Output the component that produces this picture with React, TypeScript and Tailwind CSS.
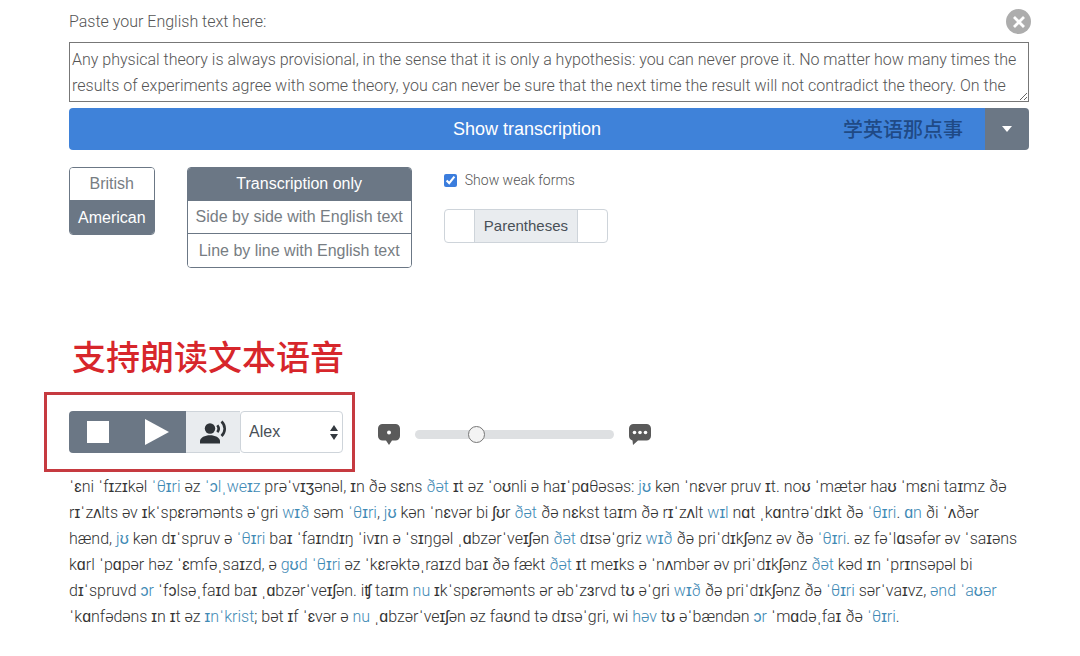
import { useState } from "react";
import clsx from "clsx";

const TEXT =
  "Any physical theory is always provisional, in the sense that it is only a hypothesis: you can never prove it. No matter how many times the results of experiments agree with some theory, you can never be sure that the next time the result will not contradict the theory. On the";

// words between asterisks have several pronunciations and are shown in blue
const LINES = [
  "ˈɛni ˈfɪzɪkəl *ˈθɪri* əz *ˈɔlˌweɪz* prəˈvɪʒənəl, ɪn ðə sɛns *ðət* ɪt əz ˈoʊnli ə haɪˈpɑθəsəs: *jʊ* kən ˈnɛvər pruv ɪt. noʊ ˈmætər haʊ ˈmɛni taɪmz ðə",
  "rɪˈzʌlts əv ɪkˈspɛrəmənts əˈgri *wɪð* səm *ˈθɪri*, *jʊ* kən ˈnɛvər bi ʃʊr *ðət* ðə nɛkst taɪm ðə rɪˈzʌlt *wɪl* nɑt ˌkɑntrəˈdɪkt ðə *ˈθɪri*. *ɑn* ði ˈʌðər",
  "hænd, *jʊ* kən dɪˈspruv ə *ˈθɪri* baɪ ˈfaɪndɪŋ ˈivɪn ə ˈsɪŋgəl ˌɑbzərˈveɪʃən *ðət* dɪsəˈgriz *wɪð* ðə priˈdɪkʃənz əv ðə *ˈθɪri*. əz fəˈlɑsəfər əv ˈsaɪəns",
  "kɑrl ˈpɑpər həz ˈɛmfəˌsaɪzd, ə *gʊd* *ˈθɪri* əz ˈkɛrəktəˌraɪzd baɪ ðə fækt *ðət* ɪt meɪks ə ˈnʌmbər əv priˈdɪkʃənz *ðət* kəd ɪn ˈprɪnsəpəl bi",
  "dɪˈspruvd *ɔr* ˈfɔlsəˌfaɪd baɪ ˌɑbzərˈveɪʃən. iʧ taɪm *nu* ɪkˈspɛrəmənts ər əbˈzɜrvd tʊ əˈgri *wɪð* ðə priˈdɪkʃənz ðə *ˈθɪri* sərˈvaɪvz, *ənd* *ˈaʊər*",
  "ˈkɑnfədəns ɪn ɪt əz *ɪnˈkrist*; bət ɪf ˈɛvər ə *nu* ˌɑbzərˈveɪʃən əz faʊnd tə dɪsəˈgri, wi *həv* tʊ əˈbændən *ɔr* ˈmɑdəˌfaɪ ðə *ˈθɪri*.",
];

const ACCENTS = ["British", "American"];
const LAYOUTS = [
  "Transcription only",
  "Side by side with English text",
  "Line by line with English text",
];

function ButtonGroup({
  items,
  initial,
}: {
  items: string[];
  initial: string;
}) {
  const [active, setActive] = useState(initial);
  return (
    <div className="flex flex-col divide-y divide-[#6b7785] overflow-hidden rounded border border-[#6b7785]">
      {items.map((item) => (
        <button
          key={item}
          type="button"
          aria-pressed={item === active}
          onClick={() => setActive(item)}
          className={clsx(
            "h-[33px] px-2 text-[16px]",
            item === active
              ? "bg-[#6b7785] text-white"
              : "bg-white text-[#777d83]"
          )}
        >
          {item}
        </button>
      ))}
    </div>
  );
}

function SlowIcon() {
  return (
    <svg viewBox="0 0 22 21" className="h-[21px] w-[22px]" aria-hidden="true">
      <path
        d="M4.5 0h13A4.5 4.5 0 0 1 22 4.5V12a4.5 4.5 0 0 1-4.5 4.5H14L11 21l-3-4.5H4.5A4.5 4.5 0 0 1 0 12V4.5A4.5 4.5 0 0 1 4.5 0z"
        fill="#5a5a5a"
      />
      <circle cx="11" cy="8.5" r="2" fill="#fff" />
    </svg>
  );
}

function FastIcon() {
  return (
    <svg viewBox="0 0 22 21" className="h-[21px] w-[22px]" aria-hidden="true">
      <path
        d="M4.5 0h13A4.5 4.5 0 0 1 22 4.5V12a4.5 4.5 0 0 1-4.5 4.5H9L4 21l-.5-4.6A4.5 4.5 0 0 1 0 12V4.5A4.5 4.5 0 0 1 4.5 0z"
        fill="#5a5a5a"
      />
      <circle cx="5.5" cy="8.5" r="1.8" fill="#fff" />
      <circle cx="11" cy="8.5" r="1.8" fill="#fff" />
      <circle cx="16.5" cy="8.5" r="1.8" fill="#fff" />
    </svg>
  );
}

function VoiceIcon() {
  return (
    <svg viewBox="0 0 27 24" className="h-6 w-[27px]" aria-hidden="true">
      <circle cx="10" cy="8.5" r="5.2" fill="#2e3338" />
      <path d="M0 23.5V21c0-3.6 5-5.8 10-5.8s10 2.2 10 5.8v2.5z" fill="#2e3338" />
      <path
        d="M17.3 5.2c1.6 2 1.6 4.9 0 6.9M21.5 1.5c4.3 4 4.3 10.3 0 14.5"
        fill="none"
        stroke="#2e3338"
        strokeWidth="2.6"
      />
    </svg>
  );
}

function Transcription() {
  return (
    <p className="mt-0.5 font-['Roboto','Liberation_Sans',sans-serif] text-[16px] leading-[26px] font-light whitespace-nowrap text-[#333]">
      {LINES.map((line, i) => (
        <span key={i} className="block">
          {line.split("*").map((part, j) =>
            j % 2 === 1 ? (
              <span key={j} className="text-[#3f8ab5]">
                {part}
              </span>
            ) : (
              part
            )
          )}
        </span>
      ))}
    </p>
  );
}

export default function App() {
  const [text, setText] = useState(TEXT);
  return (
    <main className="min-h-screen bg-white pt-[9px] pr-[51px] pb-6 pl-[69px] font-['Liberation_Sans',Arial,sans-serif]">
      <div className="flex h-[25px] items-center justify-between">
        <label
          htmlFor="source"
          className="font-['Roboto',sans-serif] text-[16px] font-light text-[#555]"
        >
          Paste your English text here:
        </label>
        <button
          type="button"
          aria-label="Clear text"
          onClick={() => setText("")}
          className="-mr-0.5 flex size-[25px] items-center justify-center rounded-full bg-[#adadad]"
        >
          <svg viewBox="0 0 12 12" className="size-3" aria-hidden="true">
            <path d="M1 1l10 10M11 1L1 11" stroke="#fff" strokeWidth="2.8" />
          </svg>
        </button>
      </div>
      <textarea
        id="source"
        value={text}
        onChange={(e) => setText(e.target.value)}
        className="mt-2 block h-[60px] w-full resize-y overflow-hidden border border-[#777] px-0.5 py-1 font-['Roboto',sans-serif] text-[16px] leading-[26px] font-light text-[#555]"
      />
      <div className="mt-1.5 flex h-[42px] overflow-hidden rounded">
        <button
          type="button"
          className="relative flex-1 bg-[#3f82d9] text-[18px] text-white"
        >
          Show transcription
          <span className="absolute top-2 right-[22px] font-['Noto_Sans_CJK_SC',sans-serif] text-[20px] leading-[26px] font-medium text-[#1f4a86]">
            学英语那点事
          </span>
        </button>
        <button
          type="button"
          aria-label="More options"
          className="flex w-11 items-center justify-center bg-[#6b7785]"
        >
          <svg viewBox="0 0 10 6" className="h-1.5 w-3" aria-hidden="true">
            <path d="M0 0h10L5 6z" fill="#fff" />
          </svg>
        </button>
      </div>

      <div className="mt-[17px] flex h-[102px] items-start gap-8">
        <ButtonGroup items={ACCENTS} initial="American" />
        <ButtonGroup items={LAYOUTS} initial="Transcription only" />
        <div>
          <label className="flex h-[26px] items-center gap-2 font-['Roboto',sans-serif] text-[14px] font-light text-[#555]">
            <input
              type="checkbox"
              defaultChecked
              className="size-[13px] accent-[#3b7ddd]"
            />
            Show weak forms
          </label>
          <div className="mt-4 flex h-[34px] w-fit overflow-hidden rounded border border-[#ced4da] text-[15px] text-[#495057]">
            <input aria-label="Opening parenthesis" className="w-[29px]" />
            <span className="flex items-center border-x border-[#ced4da] bg-[#e9ecef] px-[9px]">
              Parentheses
            </span>
            <input aria-label="Closing parenthesis" className="w-[29px]" />
          </div>
        </div>
      </div>

      <h2 className="mt-[65px] pl-[3px] font-['Noto_Sans_CJK_SC',sans-serif] text-[34px] leading-[44px] font-medium text-[#d7262b]">
        支持朗读文本语音
      </h2>
      <div className="mt-3.5 flex items-center">
        <div className="-ml-[25px] flex border-[3px] border-[#c63a40] py-4 pr-[9px] pl-[22px]">
          <div className="flex h-[42px] w-[117px] overflow-hidden rounded-l bg-[#6b7785]">
            <button
              type="button"
              aria-label="Stop"
              className="flex flex-1 items-center justify-center"
            >
              <svg viewBox="0 0 22 22" className="size-[22px]" aria-hidden="true">
                <rect width="22" height="22" fill="#fff" />
              </svg>
            </button>
            <button
              type="button"
              aria-label="Play"
              className="flex flex-1 items-center justify-center"
            >
              <svg viewBox="0 0 24 26" className="h-[26px] w-6" aria-hidden="true">
                <path d="M0 0l24 13L0 26z" fill="#fff" />
              </svg>
            </button>
          </div>
          <label
            htmlFor="voice"
            aria-label="Voice"
            className="flex h-[42px] w-[54px] items-center justify-center border-y border-[#ced4da] bg-[#e9ecef]"
          >
            <VoiceIcon />
          </label>
          <div className="relative">
            <select
              id="voice"
              className="h-[42px] w-[103px] appearance-none rounded border border-[#ced4da] bg-white px-2 text-[16px] text-[#495057]"
            >
              <option>Alex</option>
            </select>
            <svg
              viewBox="0 0 8 15"
              className="pointer-events-none absolute top-[14px] right-[5px] h-[15px] w-2"
              aria-hidden="true"
            >
              <path d="M4 0l4 6H0zM0 9h8l-4 6z" fill="#343a40" />
            </svg>
          </div>
        </div>
        <div className="ml-[23px] flex items-center gap-[15px] pt-1">
          <SlowIcon />
          <input
            type="range"
            aria-label="Reading speed"
            min={0}
            max={100}
            defaultValue={29}
            className="h-[18px] w-[199px] appearance-none bg-transparent [&::-webkit-slider-runnable-track]:h-[9px] [&::-webkit-slider-runnable-track]:rounded-full [&::-webkit-slider-runnable-track]:bg-[#dee0e2] [&::-webkit-slider-thumb]:-mt-1 [&::-webkit-slider-thumb]:size-[17px] [&::-webkit-slider-thumb]:appearance-none [&::-webkit-slider-thumb]:rounded-full [&::-webkit-slider-thumb]:border [&::-webkit-slider-thumb]:border-[#777] [&::-webkit-slider-thumb]:bg-[#f3f3f3]"
          />
          <FastIcon />
        </div>
      </div>
      <Transcription />
    </main>
  );
}
